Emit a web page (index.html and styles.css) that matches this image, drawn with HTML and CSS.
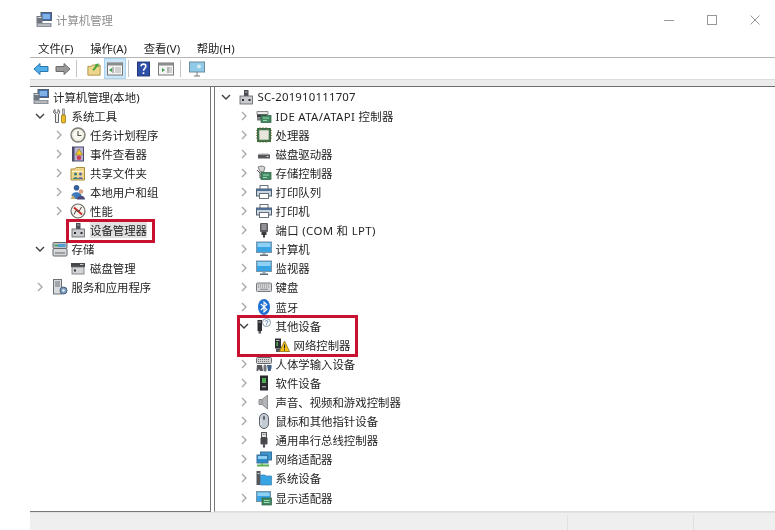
FILE: index.html
```html
<!DOCTYPE html>
<html lang="zh-CN">
<head>
<meta charset="utf-8">
<title>计算机管理</title>
<link rel="stylesheet" href="styles.css">
</head>
<body>
<svg class="defs" width="0" height="0" aria-hidden="true">
<defs>
<symbol id="chev-r" viewBox="0 0 10 10"><path d="M3 1l4 4-4 4" fill="none" stroke="#a6a6a6" stroke-width="1.3"/></symbol>
<symbol id="chev-d" viewBox="0 0 10 10"><path d="M1 3l4 4 4-4" fill="none" stroke="#404040" stroke-width="1.4"/></symbol>
<symbol id="i-comp" viewBox="0 0 16 16"><rect x="5" y="0.500" width="10.500" height="8" fill="#3f6fb0" stroke="#56606e"/><rect x="6.500" y="2" width="7.500" height="5" fill="#7fb0e6"/><rect x="0.500" y="4" width="6" height="7" fill="#6f7680"/><rect x="1.500" y="5" width="4" height="1" fill="#d8dbe0"/><path d="M0.500 11h15v4H.5z" fill="#8d939b"/><path d="M2 13h12" stroke="#e0e2e5"/></symbol>
<symbol id="i-tools" viewBox="0 0 16 16"><path d="M3 1.500v2.500l1.500 1 1.500-1V1.500c1.300.7 2 1.800 1.600 3.300L6.500 6v8.500h-3V6L1.700 4.800C1.300 3.300 1.800 2.200 3 1.500z" fill="#f0f0f0" stroke="#555" stroke-width=".9"/><rect x="10.500" y="1" width="2" height="6" fill="#c9c9c9" stroke="#666" stroke-width=".6"/><rect x="9.500" y="7" width="4" height="8" rx="1" fill="#eebb22" stroke="#8a6a10" stroke-width=".7"/></symbol>
<symbol id="i-clock" viewBox="0 0 16 16"><circle cx="8" cy="8" r="7" fill="#e9e6da" stroke="#7c7c74" stroke-width="1.400"/><circle cx="8" cy="8" r="5" fill="#f8f7f0"/><path d="M8 4v4.500h3.500" fill="none" stroke="#55554d" stroke-width="1.100"/></symbol>
<symbol id="i-event" viewBox="0 0 16 16"><rect x="2.500" y="1" width="11" height="14" fill="#b8b5d6" stroke="#4c4a6a"/><rect x="2.500" y="1" width="2" height="14" fill="#4c4a6a"/><path d="M9 3l3.500 6h-7z" fill="#f3cb2d" stroke="#8a7011" stroke-width=".6"/><circle cx="9" cy="11.800" r="2.300" fill="#cc3b55"/></symbol>
<symbol id="i-share" viewBox="0 0 16 16"><path d="M1 4h4l1-1.500h8.500V15H1z" fill="#efd68d" stroke="#a98d3c"/><path d="M2 6.500h12" stroke="#fff2c6"/><circle cx="5.500" cy="9" r="1.500" fill="#2f7f78"/><path d="M3 14c0-2.500 5-2.500 5 0z" fill="#2f7f78"/><circle cx="10.500" cy="9" r="1.500" fill="#556aa6"/><path d="M8 14c0-2.500 5-2.500 5 0z" fill="#556aa6"/></symbol>
<symbol id="i-users" viewBox="0 0 16 16"><circle cx="6.500" cy="3.800" r="2.800" fill="#355f9a"/><path d="M1.500 12c0-5 10-5 10 0l-2 3h-6z" fill="#3e78bd"/><circle cx="11" cy="7.500" r="2.300" fill="#d9a384"/><path d="M7 15.500c0-5 8-5 8 0z" fill="#4c4a7a"/><path d="M0.500 15h5l-2.500-4z" fill="#c9b261"/></symbol>
<symbol id="i-perf" viewBox="0 0 16 16"><circle cx="8" cy="8" r="7" fill="#f6f2ec" stroke="#6e6a66" stroke-width="1.200"/><path d="M4 4.500l8 7" stroke="#cc2a2a" stroke-width="2"/><path d="M4 11.500l2-4 3 1 2.500-4.500" fill="none" stroke="#444" stroke-width="1"/></symbol>
<symbol id="i-dev" viewBox="0 0 16 16"><path d="M6 1h4.500v6H6z" fill="#4b4d52"/><rect x="7" y="2.500" width="2.500" height="1" fill="#b8bbc0"/><rect x="2" y="7" width="12.500" height="8" fill="#c9cbce" stroke="#5c5e63" stroke-width=".8"/><rect x="4" y="10" width="2" height="2" fill="#2c2d30"/><rect x="10.500" y="10" width="2" height="2" fill="#2c2d30"/></symbol>
<symbol id="i-store" viewBox="0 0 16 16"><rect x="1" y="7.500" width="14" height="7.500" rx="1" fill="#d5d6d8" stroke="#63666b"/><path d="M3 12h10" stroke="#63666b"/><rect x="1" y="1.500" width="14" height="6" rx="1" fill="#bfc3c8" stroke="#63666b"/><path d="M6 3h7.500v3H6z" fill="#4e9fd6"/><path d="M2.500 4.500H6" stroke="#3a9f4a" stroke-width="1.500"/></symbol>
<symbol id="i-diskm" viewBox="0 0 16 16"><rect x="1" y="3" width="14" height="4" fill="#46484c"/><rect x="2" y="7" width="12" height="7" fill="#d3d4d6" stroke="#707276" stroke-width=".8"/><rect x="4" y="9.500" width="2" height="2" fill="#333"/><path d="M10 4.500h3.500" stroke="#c9c9c9"/></symbol>
<symbol id="i-svc" viewBox="0 0 16 16"><rect x="1.500" y="0.500" width="8" height="14.500" fill="#d7dade" stroke="#6c7075"/><path d="M3 3h5M3 5h5M3 7h5" stroke="#6c7075"/><circle cx="11.500" cy="11.500" r="3.500" fill="#7e9cc0" stroke="#465c78"/><circle cx="11.500" cy="11.500" r="1.200" fill="#eef2f6"/></symbol>
<symbol id="i-ide" viewBox="0 0 16 16"><path d="M1 3.500h11v3H1z" fill="#e8e8e8" stroke="#707070" stroke-width=".8"/><rect x="1" y="6.500" width="10" height="3" fill="#3c3d40"/><rect x="1" y="9.500" width="4" height="3" fill="#7b7d80"/><rect x="5" y="7.500" width="10" height="7" fill="#3f8a5f" stroke="#2a5d40" stroke-width=".7"/><path d="M7 10h6M7 12.500h4" stroke="#9fd7b4"/></symbol>
<symbol id="i-cpu" viewBox="0 0 16 16"><rect x="1" y="1" width="14" height="14" fill="#3d6b42"/><rect x="3" y="3" width="10" height="10" fill="#e6e6dc" stroke="#5c8a60" stroke-width=".7"/><path d="M0 3.500h1M0 6h1M0 8.500h1M0 11h1M15 3.500h1M15 6h1M15 8.500h1M15 11h1M4 0v1M7 0v1M10 0v1M4 15v1M7 15v1M10 15v1" stroke="#a09660"/></symbol>
<symbol id="i-disk" viewBox="0 0 16 16"><path d="M2 8.500L4 7h8l2 1.500z" fill="#d8d8d8"/><rect x="2" y="8.500" width="12" height="4" fill="#55575a"/><rect x="10.500" y="10" width="2" height="1" fill="#dcdcdc"/></symbol>
<symbol id="i-sctl" viewBox="0 0 16 16"><path d="M2 2c3-1.500 6-1 7 .500L7.500 7 4 6.500z" fill="#d5d5d5" stroke="#666" stroke-width=".8"/><path d="M1 5l3 3v5h2" fill="none" stroke="#555"/><rect x="5" y="7.500" width="10" height="7" fill="#3f8a5f" stroke="#2a5d40" stroke-width=".7"/><path d="M7 10h6M7 12.500h4" stroke="#9fd7b4"/></symbol>
<symbol id="i-print" viewBox="0 0 16 16"><rect x="4" y="1.500" width="8" height="4" fill="#fff" stroke="#596570" stroke-width=".9"/><rect x="0.500" y="5" width="15" height="7" fill="#c9d5e0" stroke="#4e5a66"/><rect x="0.500" y="5" width="15" height="2" fill="#4e6f96"/><rect x="3.500" y="9.500" width="9" height="5" fill="#fff" stroke="#596570" stroke-width=".9"/></symbol>
<symbol id="i-port" viewBox="0 0 16 16"><rect x="4" y="1" width="8" height="9" rx="1" fill="#5a5c60"/><path d="M5.500 3h5M5.500 5h5M5.500 7h5" stroke="#c8c8c8"/><rect x="5.500" y="10" width="5" height="3" fill="#3a3b3e"/><rect x="7" y="13" width="2" height="2.500" fill="#3a3b3e"/></symbol>
<symbol id="i-mon" viewBox="0 0 16 16"><rect x="0.500" y="1" width="15" height="10.500" fill="#39a4e3" stroke="#7a95a8"/><rect x="1.500" y="2" width="13" height="4" fill="#8fd0f5"/><rect x="6.500" y="11.500" width="3" height="2" fill="#9aa4ac"/><rect x="4" y="13.500" width="8" height="1.500" fill="#5f6b74"/></symbol>
<symbol id="i-key" viewBox="0 0 16 16"><rect x="0.500" y="4" width="15" height="8.500" rx="1" fill="#d2d4d6" stroke="#76787b"/><path d="M2 6h12M2 8h12" stroke="#85878a" stroke-dasharray="1 1"/><path d="M4 10.300h8" stroke="#85878a"/></symbol>
<symbol id="i-bt" viewBox="0 0 16 16"><ellipse cx="8" cy="8" rx="6" ry="8" fill="#1d6fd1"/><path d="M4.800 5l6 5.500L8 13V3l2.800 2.500-6 5.500" fill="none" stroke="#fff" stroke-width="1.100"/></symbol>
<symbol id="i-other" viewBox="0 0 16 16"><path d="M1.500 2h4.500v11H1.500z" fill="#2e2f33"/><rect x="2.500" y="3.500" width="2.500" height="1" fill="#b8bbc0"/><rect x="2.500" y="13" width="2.500" height="2.500" fill="#55575a"/><circle cx="10.500" cy="4.500" r="4" fill="#fff" stroke="#8496a8"/><path d="M9.200 3.500c.3-1.400 2.700-1.200 2.600.2 0 1-1.300 1-1.300 2M10.500 6.300v.8" fill="none" stroke="#4f7fb0"/></symbol>
<symbol id="i-warn" viewBox="0 0 16 16"><path d="M1 1.500h6v10H1z" fill="#2e2f33"/><rect x="2" y="3" width="3.500" height="1" fill="#b8bbc0"/><rect x="2" y="11.500" width="4" height="3.500" fill="#55575a"/><rect x="2.500" y="5" width="1.500" height="4" fill="#4fae55"/><path d="M10.500 4l5 10.500H5.500z" fill="#f5c518" stroke="#8a6a10" stroke-width=".8"/><path d="M10.500 7.500v4M10.500 12.300v1.100" stroke="#222" stroke-width="1.100"/></symbol>
<symbol id="i-hid" viewBox="0 0 16 16"><rect x="0.500" y="1.500" width="15" height="6" rx="1" fill="#d2d4d6" stroke="#66686b"/><path d="M2 3.500h12M2 5.500h12" stroke="#6e7073" stroke-dasharray="1 1"/><path d="M1 9h5l1 6H4l-1-2-1 2H.500z" fill="#55575a"/><rect x="7.500" y="8.500" width="3" height="7" rx="1.500" fill="#70767c"/><path d="M11 9h4.500v3l-1 3h-2.500z" fill="#3f5f84"/></symbol>
<symbol id="i-soft" viewBox="0 0 16 16"><rect x="4" y="0.500" width="8" height="15" fill="#2a2b2e"/><rect x="6" y="3" width="4" height="5" fill="#4fae55"/><rect x="6" y="11" width="4" height="1.500" fill="#9a9da2"/></symbol>
<symbol id="i-snd" viewBox="0 0 16 16"><path d="M3 5.500h3L11.500 1v14L6 10.500H3z" fill="#b3b5b8" stroke="#7a7c80" stroke-width=".8"/><path d="M6 5.500v5" stroke="#8a8c90"/></symbol>
<symbol id="i-mouse" viewBox="0 0 16 16"><rect x="3.500" y="0.500" width="9" height="15" rx="4.500" fill="#c4cad2" stroke="#5f656d"/><rect x="7" y="3" width="2" height="4" rx="1" fill="#5f656d"/><path d="M5 6v6" stroke="#e9ebee"/></symbol>
<symbol id="i-usb" viewBox="0 0 16 16"><rect x="5.500" y="0.500" width="5" height="5" fill="#e4e4e4" stroke="#555"/><rect x="6.800" y="1.800" width="1" height="1" fill="#555"/><rect x="8.500" y="1.800" width="1" height="1" fill="#555"/><rect x="4.500" y="5.500" width="7" height="7" rx="1" fill="#48494d"/><rect x="7" y="12.500" width="2" height="3" fill="#48494d"/></symbol>
<symbol id="i-net" viewBox="0 0 16 16"><rect x="4.500" y="1" width="11" height="8" fill="#3b9ad4" stroke="#3a6f96"/><rect x="1" y="4" width="11" height="8" fill="#2d8bcc" stroke="#3a6f96"/><rect x="2" y="5" width="9" height="3" fill="#8dcdf2"/><path d="M1 14.500h12" stroke="#58b04f" stroke-width="2"/><path d="M6 12v2" stroke="#58b04f" stroke-width="1.500"/></symbol>
<symbol id="i-sys" viewBox="0 0 16 16"><rect x="0.500" y="1" width="4" height="14" fill="#55575b"/><rect x="1.500" y="3" width="2" height="1" fill="#d0d0d0"/><path d="M4.500 5H9l1 1h5.500v9h-11z" fill="#39a4e3" stroke="#3a7fae" stroke-width=".7"/></symbol>
<symbol id="i-disp" viewBox="0 0 16 16"><rect x="0.500" y="1.500" width="14" height="10" fill="#39a4e3" stroke="#7a95a8"/><rect x="1.500" y="2.500" width="12" height="3.500" fill="#8fd0f5"/><rect x="6" y="8" width="9.500" height="7" fill="#3f8a5f" stroke="#2a5d40" stroke-width=".7"/><path d="M8 10.500h5.500M8 12.500h5.500" stroke="#9fd7b4"/></symbol>
</defs>
</svg>

<div class="window">
  <header class="titlebar">
    <div class="title-left">
      <svg class="ico"><use href="#i-comp"/></svg>
      <span class="title-text">计算机管理</span>
    </div>
    <div class="win-controls">
      <svg class="ctl" viewBox="0 0 10 10"><path d="M0 5.500h10" stroke="#999" fill="none"/></svg>
      <svg class="ctl" viewBox="0 0 10 10"><rect x="0.500" y="0.500" width="9" height="9" stroke="#999" fill="none"/></svg>
      <svg class="ctl" viewBox="0 0 10 10"><path d="M.5 .5l9 9M9.500 .5l-9 9" stroke="#999" fill="none"/></svg>
    </div>
  </header>

  <nav class="menubar">
    <span>文件(F)</span><span>操作(A)</span><span>查看(V)</span><span>帮助(H)</span>
  </nav>

  <div class="shell">
    <div class="toolbar">
      <svg class="tool" viewBox="0 0 16 14"><path d="M1 7l6-5.500V4.500h8v5H7v3z" fill="#4fb0ea" stroke="#2c75ad"/></svg>
      <svg class="tool" viewBox="0 0 16 14"><path d="M15 7L9 1.500V4.500H1v5h8v3z" fill="#9a9a9a" stroke="#6b6b6b"/></svg>
      <i class="tsep"></i>
      <svg class="tool" viewBox="0 0 16 16"><path d="M1 5h4l1-1.500h9V15H1z" fill="#efd68d" stroke="#a98d3c"/><path d="M6 9l4-5-1.500-1L13 1.500 13.500 6 12 5 8 10z" fill="#47a53e"/></svg>
      <span class="tool-active"><svg class="tool" viewBox="0 0 16 14"><rect x="0.500" y="1" width="15" height="12" fill="#f5f5f5" stroke="#777"/><rect x="0.500" y="1" width="15" height="2.500" fill="#8c8c8c"/><path d="M6 5v6" stroke="#777"/><path d="M5 6l-3 2 3 2z" fill="#3a9f4a"/><path d="M8 6h6M8 8h6M8 10h6" stroke="#aaa"/></svg></span>
      <i class="tsep sep2"></i>
      <svg class="tool narrow" viewBox="0 0 14 16"><rect x="0.500" y="0.500" width="13" height="15" fill="#2e4fa8" stroke="#1d3272"/><path d="M4.500 5c0-3 5-3 5 0 0 2.300-2.500 2.300-2.500 5M7 11.500v2" fill="none" stroke="#fff" stroke-width="1.700"/></svg>
      <svg class="tool mid" viewBox="0 0 16 14"><rect x="0.500" y="1" width="15" height="12" fill="#f5f5f5" stroke="#777"/><rect x="0.500" y="1" width="15" height="2.500" fill="#8c8c8c"/><path d="M10 5v6" stroke="#777"/><path d="M4 6l3 2-3 2z" fill="#3a9f4a"/><path d="M11 6h3M11 8h3M11 10h3" stroke="#aaa"/></svg>
      <i class="tsep sep3"></i>
      <svg class="tool last" viewBox="0 0 16 16"><rect x="0.500" y="1" width="15" height="10" fill="#8fcbe8" stroke="#6f8a9a"/><path d="M5 15h6M8 11v4" stroke="#777"/><circle cx="10" cy="5.500" r="2" fill="#d7ecf6"/></svg>
    </div>
    <div class="band"></div>

    <div class="panes">
      <aside class="pane left">
        <div class="row"><svg class="ico"><use href="#i-comp"/></svg><span>计算机管理(本地)</span></div>
        <div class="row l1"><svg class="chev"><use href="#chev-d"/></svg><svg class="ico"><use href="#i-tools"/></svg><span>系统工具</span></div>
        <div class="row l2"><svg class="chev"><use href="#chev-r"/></svg><svg class="ico"><use href="#i-clock"/></svg><span>任务计划程序</span></div>
        <div class="row l2"><svg class="chev"><use href="#chev-r"/></svg><svg class="ico"><use href="#i-event"/></svg><span>事件查看器</span></div>
        <div class="row l2"><svg class="chev"><use href="#chev-r"/></svg><svg class="ico"><use href="#i-share"/></svg><span>共享文件夹</span></div>
        <div class="row l2"><svg class="chev"><use href="#chev-r"/></svg><svg class="ico"><use href="#i-users"/></svg><span>本地用户和组</span></div>
        <div class="row l2"><svg class="chev"><use href="#chev-r"/></svg><svg class="ico"><use href="#i-perf"/></svg><span>性能</span></div>
        <div class="row l2 selected"><i class="chev"></i><svg class="ico"><use href="#i-dev"/></svg><span>设备管理器</span></div>
        <div class="row l1"><svg class="chev"><use href="#chev-d"/></svg><svg class="ico"><use href="#i-store"/></svg><span>存储</span></div>
        <div class="row l2"><i class="chev"></i><svg class="ico"><use href="#i-diskm"/></svg><span>磁盘管理</span></div>
        <div class="row l1"><svg class="chev"><use href="#chev-r"/></svg><svg class="ico"><use href="#i-svc"/></svg><span>服务和应用程序</span></div>
        <div class="mark mark-dev"></div>
      </aside>
      <main class="pane right">
        <div class="row r0"><svg class="chev"><use href="#chev-d"/></svg><svg class="ico"><use href="#i-dev"/></svg><span class="latin-sm">SC-201910111707</span></div>
        <div class="row r1"><svg class="chev"><use href="#chev-r"/></svg><svg class="ico"><use href="#i-ide"/></svg><span class="latin">IDE ATA/ATAPI 控制器</span></div>
        <div class="row r1"><svg class="chev"><use href="#chev-r"/></svg><svg class="ico"><use href="#i-cpu"/></svg><span>处理器</span></div>
        <div class="row r1"><svg class="chev"><use href="#chev-r"/></svg><svg class="ico"><use href="#i-disk"/></svg><span>磁盘驱动器</span></div>
        <div class="row r1"><svg class="chev"><use href="#chev-r"/></svg><svg class="ico"><use href="#i-sctl"/></svg><span>存储控制器</span></div>
        <div class="row r1"><svg class="chev"><use href="#chev-r"/></svg><svg class="ico"><use href="#i-print"/></svg><span>打印队列</span></div>
        <div class="row r1"><svg class="chev"><use href="#chev-r"/></svg><svg class="ico"><use href="#i-print"/></svg><span>打印机</span></div>
        <div class="row r1"><svg class="chev"><use href="#chev-r"/></svg><svg class="ico"><use href="#i-port"/></svg><span class="latin">端口 (COM 和 LPT)</span></div>
        <div class="row r1"><svg class="chev"><use href="#chev-r"/></svg><svg class="ico"><use href="#i-mon"/></svg><span>计算机</span></div>
        <div class="row r1"><svg class="chev"><use href="#chev-r"/></svg><svg class="ico"><use href="#i-mon"/></svg><span>监视器</span></div>
        <div class="row r1"><svg class="chev"><use href="#chev-r"/></svg><svg class="ico"><use href="#i-key"/></svg><span>键盘</span></div>
        <div class="row r1"><svg class="chev"><use href="#chev-r"/></svg><svg class="ico"><use href="#i-bt"/></svg><span>蓝牙</span></div>
        <div class="row r1"><svg class="chev"><use href="#chev-d"/></svg><svg class="ico"><use href="#i-other"/></svg><span>其他设备</span></div>
        <div class="row r2"><svg class="ico"><use href="#i-warn"/></svg><span>网络控制器</span></div>
        <div class="row r1"><svg class="chev"><use href="#chev-r"/></svg><svg class="ico"><use href="#i-hid"/></svg><span>人体学输入设备</span></div>
        <div class="row r1"><svg class="chev"><use href="#chev-r"/></svg><svg class="ico"><use href="#i-soft"/></svg><span>软件设备</span></div>
        <div class="row r1"><svg class="chev"><use href="#chev-r"/></svg><svg class="ico"><use href="#i-snd"/></svg><span>声音、视频和游戏控制器</span></div>
        <div class="row r1"><svg class="chev"><use href="#chev-r"/></svg><svg class="ico"><use href="#i-mouse"/></svg><span>鼠标和其他指针设备</span></div>
        <div class="row r1"><svg class="chev"><use href="#chev-r"/></svg><svg class="ico"><use href="#i-usb"/></svg><span>通用串行总线控制器</span></div>
        <div class="row r1"><svg class="chev"><use href="#chev-r"/></svg><svg class="ico"><use href="#i-net"/></svg><span>网络适配器</span></div>
        <div class="row r1"><svg class="chev"><use href="#chev-r"/></svg><svg class="ico"><use href="#i-sys"/></svg><span>系统设备</span></div>
        <div class="row r1"><svg class="chev"><use href="#chev-r"/></svg><svg class="ico"><use href="#i-disp"/></svg><span>显示适配器</span></div>
        <div class="mark mark-other"></div>
      </main>
    </div>

    <footer class="statusbar">
      <i class="cell"></i><i class="cell"></i><i class="cell"></i>
    </footer>
  </div>
</div>
</body>
</html>
```
FILE: styles.css
```css
* { box-sizing: border-box; }
html, body { margin: 0; height: 100%; background: #fff; overflow: hidden; }
body { font-family: "Noto Sans", "Noto Sans CJK SC", sans-serif; font-size: 11.4px; color: #242424; }
.defs { display: block; height: 0; }
.window { display: flex; flex-direction: column; width: 775px; height: 530px; filter: blur(.3px); }

.titlebar { height: 39px; flex: none; display: flex; align-items: center; justify-content: space-between; padding: 1px 0 0 36px; }
.title-left { display: flex; align-items: center; }
.title-text { color: #8e8e8e; }
.win-controls { display: flex; gap: 33px; padding-right: 15px; }
.ctl { width: 10px; height: 10px; display: block; }

.menubar { height: 18px; flex: none; display: flex; align-items: center; gap: 16.600px; padding-left: 38px; }

.shell { flex: 1; min-height: 0; margin-left: 30px; display: flex; flex-direction: column; border-top: 1px solid #b4b4b4; }

.toolbar { height: 21px; flex: none; display: flex; align-items: center; padding-left: 3px; }
.tool { width: 16px; height: 14px; display: block; flex: none; margin-right: 6px; }
.tsep { width: 1px; height: 17px; background: #c4c4c4; margin: 0 9px 0 -1px; flex: none; }
.tool-active { display: flex; align-items: center; justify-content: center; width: 22px; height: 21px; background: #cde6f7; border: 1px solid #a8d4f2; margin-left: -4px; margin-right: 2px; }
.tool-active .tool { margin: 0; }
.sep2 { margin: 0 8px 0 0; }
.narrow { width: 13px; height: 16px; margin-right: 8px; }
.mid { margin-right: 7px; }
.sep3 { margin-right: 8px; }
.last { height: 16px; }

.band { height: 8px; flex: none; background: #ececec; border-top: 1px solid #dcdcdc; border-bottom: 1px solid #6e6e6e; }

.panes { flex: 1; min-height: 0; display: flex; }
.pane { position: relative; height: 425px; background: #fff; }
.left { width: 181px; flex: none; border-right: 1px solid #777; border-bottom: 1px solid #777; padding-left: 3px; }
.right { flex: 1; margin-left: 3px; border-left: 1px solid #777; border-bottom: 1px solid #ddd; padding-left: 4px; }

.row { height: 19.100px; display: flex; align-items: center; white-space: nowrap; }
.ico { width: 16px; height: 16px; display: block; flex: none; margin-right: 4px; }
.chev { width: 10px; height: 10px; display: block; flex: none; margin: 0 6.500px 0 2px; }
.l2 { padding-left: 18.500px; }
.r1 { padding-left: 18px; }
.r2 { padding-left: 54.500px; }
.selected span { background: #e1e1e1; }
.latin { letter-spacing: .35px; }
.latin-sm { letter-spacing: .2px; }

.mark { position: absolute; border: 3px solid #c8112f; pointer-events: none; }
.mark-dev { left: 36px; top: 132px; width: 89px; height: 24px; }
.mark-other { left: 22px; top: 228px; width: 121px; height: 42px; }

.statusbar { height: 18px; flex: none; background: #efefef; border-top: 1px solid #e2e2e2; display: grid; grid-template-columns: 538px 126px 1fr; }
.cell { display: block; margin-top: 2px; border-right: 1px solid #e0e0e0; }
.cell:last-child { border-right: 0; }
```
